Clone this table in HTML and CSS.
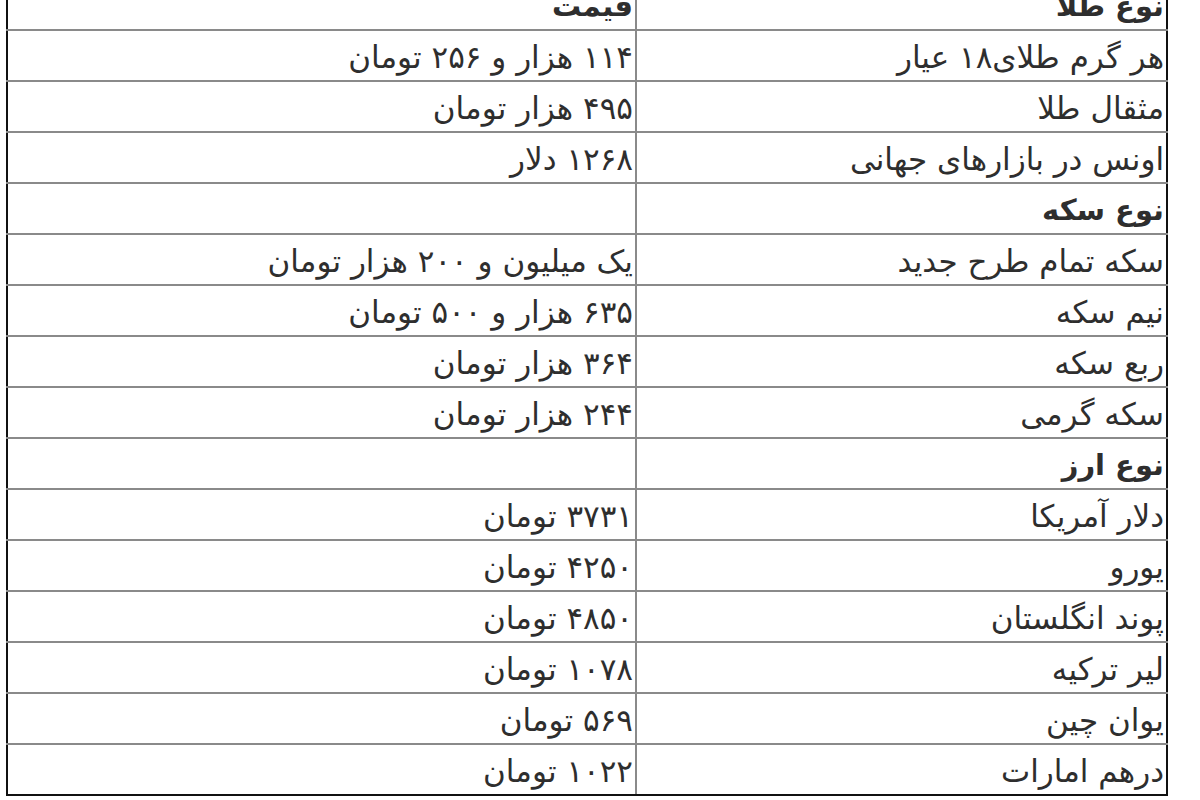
FILE: index.html
```html
<!DOCTYPE html>
<html lang="fa" dir="rtl">
<head>
<meta charset="utf-8">
<title>قیمت طلا، سکه و ارز</title>
<link rel="stylesheet" href="styles.css">
</head>
<body>
<table class="prices">
  <colgroup><col class="col-name"><col class="col-price"></colgroup>
  <tr class="head"><td>نوع طلا</td><td>قیمت</td></tr>
  <tr><td>هر گرم طلای۱۸ عیار</td><td>۱۱۴ هزار و ۲۵۶ تومان</td></tr>
  <tr><td>مثقال طلا</td><td>۴۹۵ هزار تومان</td></tr>
  <tr><td>اونس در بازارهای جهانی</td><td>۱۲۶۸ دلار</td></tr>
  <tr class="head"><td>نوع سکه</td><td></td></tr>
  <tr><td>سکه تمام طرح جدید</td><td>یک میلیون و ۲۰۰ هزار تومان</td></tr>
  <tr><td>نیم سکه</td><td>۶۳۵ هزار و ۵۰۰ تومان</td></tr>
  <tr><td>ربع سکه</td><td>۳۶۴ هزار تومان</td></tr>
  <tr><td>سکه گرمی</td><td>۲۴۴ هزار تومان</td></tr>
  <tr class="head"><td>نوع ارز</td><td></td></tr>
  <tr><td>دلار آمریکا</td><td>۳۷۳۱ تومان</td></tr>
  <tr><td>یورو</td><td>۴۲۵۰ تومان</td></tr>
  <tr><td>پوند انگلستان</td><td>۴۸۵۰ تومان</td></tr>
  <tr><td>لیر ترکیه</td><td>۱۰۷۸ تومان</td></tr>
  <tr><td>یوان چین</td><td>۵۶۹ تومان</td></tr>
  <tr><td>درهم امارات</td><td>۱۰۲۲ تومان</td></tr>
</table>
</body>
</html>
```
FILE: styles.css
```css
html, body {
  margin: 0;
  padding: 0;
  background: #ffffff;
}
body {
  font-family: "DejaVu Sans", "Noto Sans", sans-serif;
  color: #2e2e2e;
}
.prices {
  border-collapse: collapse;
  width: 1160px;
  margin: -22px 32px 0 0;
  border: 2px solid #111;
  table-layout: fixed;
}
.col-name { width: 531px; }
.col-price { width: 629px; }
.prices td {
  height: 45px;
  padding: 4px 2px 0 0;
  border: 2px solid #8a8a8a;
  text-align: right;
  vertical-align: middle;
  font-size: 31px;
  line-height: 1;
  white-space: nowrap;
  overflow: hidden;
}
.prices tr:first-child td { border-top-color: #111; }
.prices td:first-child { border-right-color: #111; }
.prices td:last-child { border-left-color: #111; }
.prices tr:last-child td { border-bottom-color: #111; }
.head td { font-weight: bold; font-size: 29px; }
```
